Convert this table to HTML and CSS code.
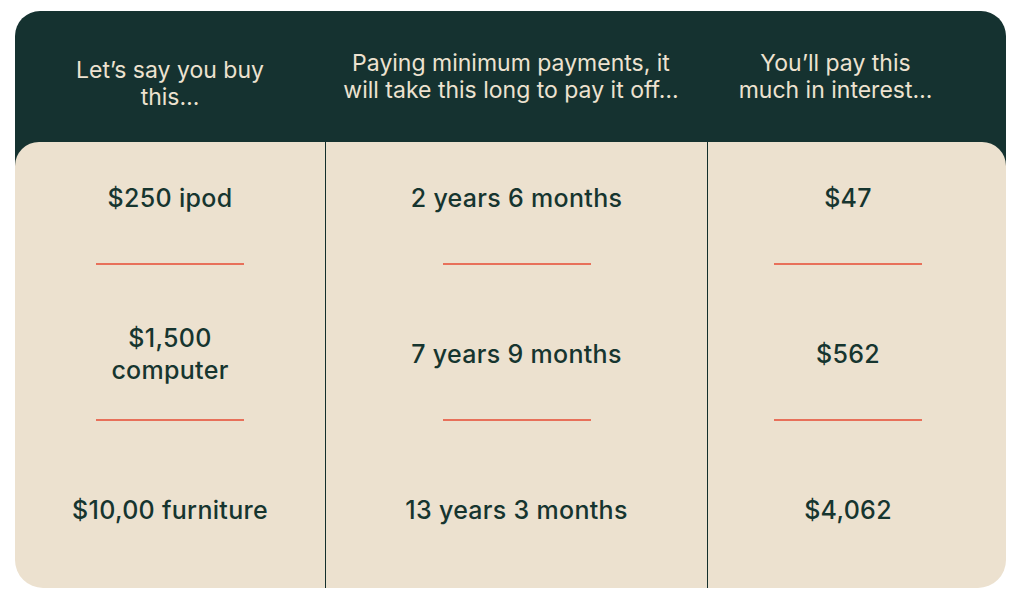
FILE: index.html
```html
<!DOCTYPE html>
<html lang="en">
<head>
<meta charset="utf-8">
<title>Minimum payments</title>
<link rel="stylesheet" href="styles.css">
</head>
<body>
<div class="card">
  <div class="head">
    <div class="hcell h1">Let’s say you buy<br>this…</div>
    <div class="hcell h2">Paying minimum payments, it<br>will take this long to pay it off…</div>
    <div class="hcell h3">You’ll pay this<br>much in interest…</div>
  </div>
  <div class="body">
    <div class="col c1">
      <div class="val">$250 ipod</div>
      <div class="rule"></div>
      <div class="val">$1,500<br>computer</div>
      <div class="rule"></div>
      <div class="val">$10,00 furniture</div>
    </div>
    <div class="col c2">
      <div class="val">2 years 6 months</div>
      <div class="rule"></div>
      <div class="val">7 years 9 months</div>
      <div class="rule"></div>
      <div class="val">13 years 3 months</div>
    </div>
    <div class="col c3">
      <div class="val">$47</div>
      <div class="rule"></div>
      <div class="val">$562</div>
      <div class="rule"></div>
      <div class="val">$4,062</div>
    </div>
  </div>
</div>
</body>
</html>
```
FILE: styles.css
```css
* { box-sizing: border-box; }
html, body { margin: 0; padding: 0; background: #ffffff; }
body { font-family: Inter, "Liberation Sans", sans-serif; }

.card {
  margin: 11px 18px 0 15px;
  border-radius: 25px 25px 0 0;
  background: linear-gradient(to bottom, #153230 0, #153230 220px, transparent 220px);
}

.head {
  display: grid;
  grid-template-columns: 310px 382px 1fr;
  height: 131px;
}
.hcell {
  display: flex;
  align-items: center;
  justify-content: center;
  text-align: center;
  color: #ede2d0;
  font-size: 23px;
  line-height: 27px;
  font-weight: 400;
}
.h1 { padding-top: 14px; }
.h2 { padding-right: 10px; }
.h3 { padding-right: 42px; }

.body {
  display: grid;
  grid-template-columns: 310px 382px 1fr;
  height: 446px;
  background: #ece1cf;
  border-radius: 24px 24px 28px 28px;
}
.col {
  display: flex;
  flex-direction: column;
  align-items: center;
  padding-top: 11px;
}
.c2, .c3 { border-left: 1px solid #132f2c; }
.c3 { padding-right: 18px; }

.val {
  height: 90px;
  display: flex;
  align-items: center;
  justify-content: center;
  text-align: center;
  color: #16352f;
  font-size: 25px;
  line-height: 32px;
  font-weight: 550;
  letter-spacing: 0.3px;
}
.rule {
  width: 148px;
  height: 2px;
  background: #e8705a;
  margin: 20px 0 44px;
}
```
